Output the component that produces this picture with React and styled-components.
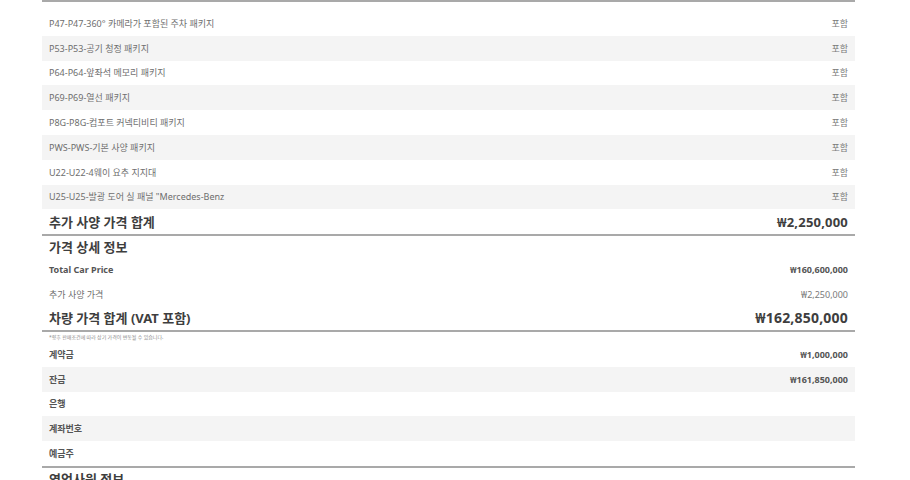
import React from "react";
import styled, { createGlobalStyle } from "styled-components";

const options = [
  "P47-P47-360° 카메라가 포함된 주차 패키지",
  "P53-P53-공기 청정 패키지",
  "P64-P64-앞좌석 메모리 패키지",
  "P69-P69-열선 패키지",
  "P8G-P8G-컴포트 커넥티비티 패키지",
  "PWS-PWS-기본 사양 패키지",
  "U22-U22-4웨이 요추 지지대",
  "U25-U25-발광 도어 실 패널 \"Mercedes-Benz",
];

const payment = [
  { label: "계약금", value: "₩1,000,000" },
  { label: "잔금", value: "₩161,850,000" },
  { label: "은행", value: "" },
  { label: "계좌번호", value: "" },
  { label: "예금주", value: "" },
];

const GlobalStyle = createGlobalStyle`
  html, body {
    margin: 0;
    padding: 0;
    background: #ffffff;
  }
  body {
    font-family: "Noto Sans", "Noto Sans CJK KR", sans-serif;
    color: #444;
  }
`;

const Page = styled.div`
  width: 813px;
  margin-left: 42px;
  height: 480px;
  overflow: hidden;
`;

const Divider = styled.div`
  height: 2px;
  background: #a9a9a9;
`;

const List = styled.div`
  display: flex;
  flex-direction: column;
  margin-top: ${(p) => p.$top || 0}px;
`;

const Row = styled.div`
  height: 24.8px;
  display: flex;
  align-items: center;
  justify-content: space-between;
  padding: 0 7px;
  background: ${(p) => (p.$shade ? "#f4f4f4" : "transparent")};
  font-size: 9px;
  font-weight: ${(p) => (p.$bold ? 700 : 400)};
  color: ${(p) => (p.$bold ? "#555" : "#6e6e6e")};
`;

const Included = styled.span`
  color: #7a7a7a;
`;

const Summary = styled.div`
  height: ${(p) => p.$h || 25}px;
  display: flex;
  align-items: flex-end;
  justify-content: space-between;
  padding: 0 7px 3px;
  box-sizing: border-box;
  font-size: 13px;
  font-weight: 700;
  color: #3e3e3e;
`;

const Value = styled.span`
  font-size: ${(p) => p.$size || 13}px;
  letter-spacing: 0.2px;
`;

const Heading = styled.div`
  height: 21px;
  display: flex;
  align-items: center;
  padding: 0 7px;
  font-size: 13px;
  font-weight: 700;
  color: #3e3e3e;
`;

const Note = styled.div`
  height: 10px;
  padding: 1px 7px 0;
  box-sizing: border-box;
  font-size: 5px;
  color: #8a8a8a;
  line-height: 8px;
`;

export default function App() {
  return (
    <>
      <GlobalStyle />
      <Page>
        <Divider />
        <List $top={9}>
          {options.map((o, i) => (
            <Row key={o} $shade={i % 2 === 1}>
              <span>{o}</span>
              <Included>포함</Included>
            </Row>
          ))}
        </List>
        <Summary>
          <span>추가 사양 가격 합계</span>
          <Value>₩2,250,000</Value>
        </Summary>
        <Divider />
        <Heading>가격 상세 정보</Heading>
        <List>
          <Row $bold>
            <span>Total Car Price</span>
            <span>₩160,600,000</span>
          </Row>
          <Row>
            <span>추가 사양 가격</span>
            <Included>₩2,250,000</Included>
          </Row>
        </List>
        <Summary $h={23}>
          <span>차량 가격 합계 (VAT 포함)</span>
          <Value $size={14}>₩162,850,000</Value>
        </Summary>
        <Divider />
        <Note>*향후 판매조건에 따라 상기 가격이 변동될 수 있습니다.</Note>
        <List>
          {payment.map((p, i) => (
            <Row key={p.label} $bold $shade={i % 2 === 1}>
              <span>{p.label}</span>
              <span>{p.value}</span>
            </Row>
          ))}
        </List>
        <Divider />
        <Heading>영업사원 정보</Heading>
      </Page>
    </>
  );
}
